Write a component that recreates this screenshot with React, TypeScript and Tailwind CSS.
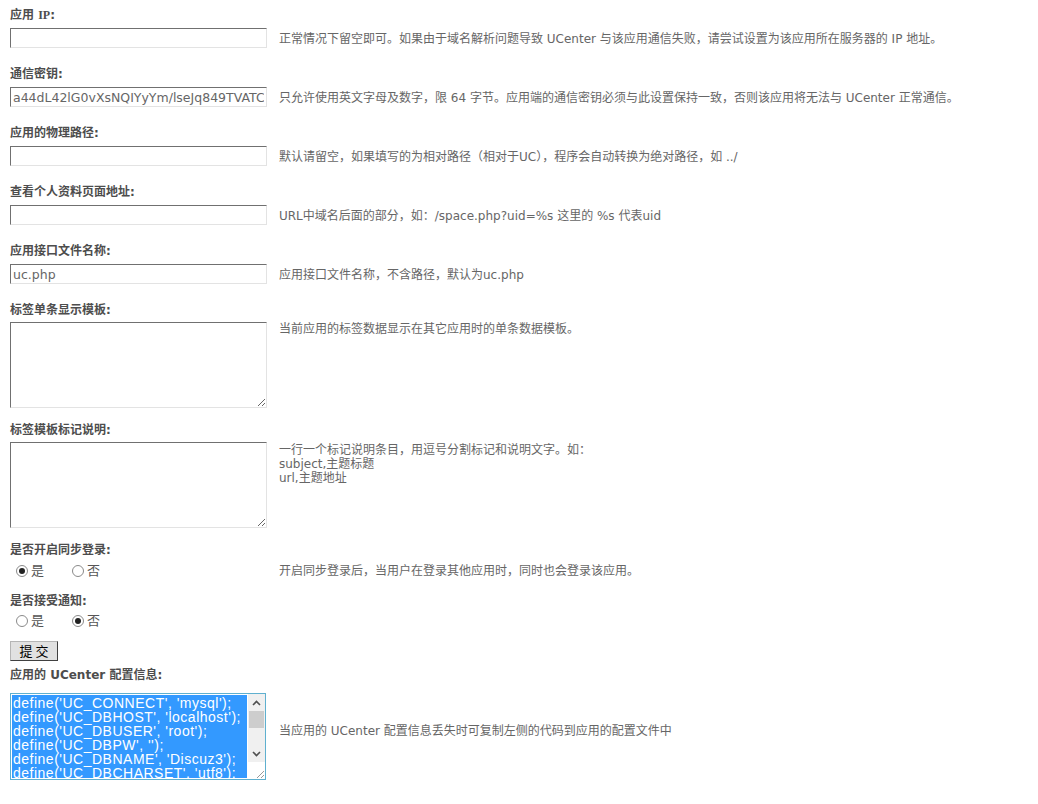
import type { ReactNode } from "react";

const sans = "font-['DejaVu_Sans','Noto_Sans_CJK_SC',sans-serif]";
const fieldBorder =
  "border border-t-[#707070] border-l-[#707070] border-r-[#e3e3e3] border-b-[#e3e3e3]";

const Label = ({ children, className = "" }: { children: ReactNode; className?: string }) => (
  <div className={`h-[18px] leading-[18px] text-[12px] font-bold text-[#4d4d4d] ${className}`}>
    {children}
  </div>
);

const Desc = ({ children, className = "" }: { children: ReactNode; className?: string }) => (
  <div className={`text-[12px] leading-[14px] text-[#666] whitespace-nowrap ${className}`}>{children}</div>
);

const InputRow = ({ label, value, desc, first }: { label: ReactNode; value?: string; desc: ReactNode; first?: boolean }) => (
  <div>
    <Label className={first ? "mt-[6px]" : "mt-[17px]"}>{label}</Label>
    <div className="mt-[4px] flex h-[20px] items-center">
      <div className="w-[269px] shrink-0">
        <input
          readOnly
          value={value ?? ""}
          className={`block w-[257px] h-[20px] px-[2px] bg-white text-[12.5px] text-[#666] outline-none ${sans} ${fieldBorder}`}
        />
      </div>
      <Desc className="pt-[2px]">{desc}</Desc>
    </div>
  </div>
);

const Radio = ({ checked }: { checked?: boolean }) => (
  <span className="inline-flex w-[12px] h-[12px] rounded-full border border-[#8a8a8a] bg-white items-center justify-center">
    {checked && <span className="w-[6px] h-[6px] rounded-full bg-[#222]" />}
  </span>
);

const RadioRow = ({ yes, desc }: { yes: boolean; desc?: ReactNode }) => (
  <div className="flex h-[16px] items-center">
    <div className="w-[269px] shrink-0 flex items-center pl-[6px] text-[13px] text-[#555]">
      <Radio checked={yes} />
      <span className="ml-[3px]">是</span>
      <span className="ml-[28px] flex">
        <Radio checked={!yes} />
      </span>
      <span className="ml-[3px]">否</span>
    </div>
    {desc && <Desc>{desc}</Desc>}
  </div>
);

const Chevron = ({ up }: { up?: boolean }) => (
  <svg width="9" height="6" viewBox="0 0 9 6">
    <polyline
      points={up ? "1,5 4.5,1.5 8,5" : "1,1 4.5,4.5 8,1"}
      fill="none"
      stroke="#505050"
      strokeWidth="1.6"
    />
  </svg>
);

const configLines = [
  "define('UC_CONNECT', 'mysql');",
  "define('UC_DBHOST', 'localhost');",
  "define('UC_DBUSER', 'root');",
  "define('UC_DBPW', '');",
  "define('UC_DBNAME', 'Discuz3');",
  "define('UC_DBCHARSET', 'utf8');",
];

export default function App() {
  return (
    <div className={`min-h-screen bg-white pl-[10px] ${sans}`}>
      <InputRow
        first
        label={
          <>
            应用 <span className="font-['Liberation_Serif',serif]">IP</span>:
          </>
        }
        desc="正常情况下留空即可。如果由于域名解析问题导致 UCenter 与该应用通信失败，请尝试设置为该应用所在服务器的 IP 地址。"
      />
      <InputRow
        label="通信密钥:"
        value="a44dL42lG0vXsNQIYyYm/lseJq849TVATCqP"
        desc="只允许使用英文字母及数字，限 64 字节。应用端的通信密钥必须与此设置保持一致，否则该应用将无法与 UCenter 正常通信。"
      />
      <InputRow label="应用的物理路径:" desc="默认请留空，如果填写的为相对路径（相对于UC），程序会自动转换为绝对路径，如 ../" />
      <InputRow label="查看个人资料页面地址:" desc="URL中域名后面的部分，如：/space.php?uid=%s 这里的 %s 代表uid" />
      <InputRow label="应用接口文件名称:" value="uc.php" desc="应用接口文件名称，不含路径，默认为uc.php" />

      {/* 标签模板 */}
      <Label className="mt-[17px]">标签单条显示模板:</Label>
      <div className="mt-[3px] flex">
        <div className="w-[269px] shrink-0">
          <textarea readOnly className={`block w-[257px] h-[86px] bg-white outline-none ${fieldBorder}`} />
        </div>
        <Desc>当前应用的标签数据显示在其它应用时的单条数据模板。</Desc>
      </div>

      <Label className="mt-[13px]">标签模板标记说明:</Label>
      <div className="mt-[3px] flex">
        <div className="w-[269px] shrink-0">
          <textarea readOnly className={`block w-[257px] h-[86px] bg-white outline-none ${fieldBorder}`} />
        </div>
        <Desc className="pt-[1px]">
          <div>一行一个标记说明条目，用逗号分割标记和说明文字。如：</div>
          <div>subject,主题标题</div>
          <div>url,主题地址</div>
        </Desc>
      </div>

      <Label className="mt-[13px]">是否开启同步登录:</Label>
      <div className="mt-[4px]">
        <RadioRow yes desc="开启同步登录后，当用户在登录其他应用时，同时也会登录该应用。" />
      </div>

      <Label className="mt-[13px]">是否接受通知:</Label>
      <div className="mt-[3px]">
        <RadioRow yes={false} />
      </div>

      <button className="mt-[12px] block w-[48px] h-[20px] bg-[#e1e1e1] border border-t-[#b5b5b5] border-l-[#b5b5b5] border-r-[#404040] border-b-[#404040] text-[13px] leading-[18px] text-black font-['Noto_Sans_CJK_SC',sans-serif]">
        提 交
      </button>

      <Label className="mt-[5px]">应用的 UCenter 配置信息:</Label>
      <div className="mt-[9px] flex">
        <div className="w-[269px] shrink-0">
          <div className="flex w-[256px] h-[87px] border border-[#5fb0cf] bg-white">
            <div className="m-[1px] flex-1 overflow-hidden bg-[#3399ff] pl-[1px] pt-[1px] font-['Liberation_Sans',sans-serif] text-[14px] tracking-[0.5px] leading-[14px] text-white whitespace-nowrap">
              {configLines.map((l) => (
                <div key={l}>{l}</div>
              ))}
            </div>
            <div className="w-[17px] flex flex-col bg-[#f0f0f0]">
              <div className="h-[17px] flex items-center justify-center">
                <Chevron up />
              </div>
              <div className="h-[17px] mx-[1px] bg-[#cdcdcd]" />
              <div className="flex-1" />
              <div className="h-[17px] flex items-center justify-center">
                <Chevron />
              </div>
              <div className="h-[17px] bg-white flex items-end justify-end">
                <svg width="10" height="10" viewBox="0 0 10 10">
                  <line x1="9" y1="2" x2="2" y2="9" stroke="#999" strokeWidth="1" />
                  <line x1="9" y1="6" x2="6" y2="9" stroke="#999" strokeWidth="1" />
                </svg>
              </div>
            </div>
          </div>
        </div>
        <Desc className="mt-[31px]">当应用的 UCenter 配置信息丢失时可复制左侧的代码到应用的配置文件中</Desc>
      </div>
    </div>
  );
}
